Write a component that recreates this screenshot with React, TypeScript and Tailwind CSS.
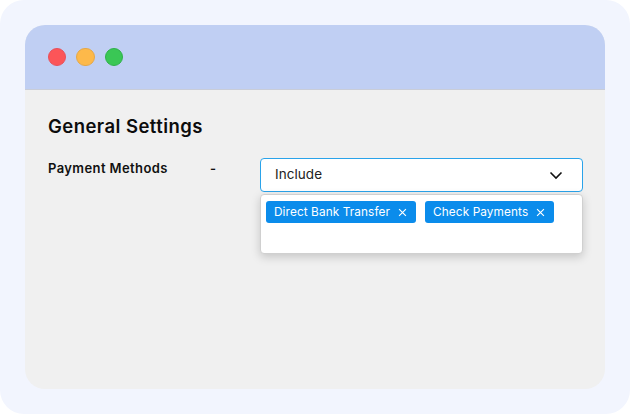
import React from "react";

function Tag({ label }: { label: string }) {
  return (
    <div className="flex h-[22px] items-center gap-[8px] rounded-[3px] bg-[#0b8ceb] pl-[8px] pr-[9px] pt-px text-[11.8px] leading-none tracking-[0.1px] text-white">
      <span>{label}</span>
      <svg width="9" height="9" viewBox="0 0 10 10" fill="none" stroke="white" strokeWidth="1.3" className="-mt-px">
        <path d="M1.2 1.2 8.8 8.8M8.8 1.2 1.2 8.8" />
      </svg>
    </div>
  );
}

export default function App() {
  return (
    <div className="h-[414px] w-[630px] bg-white font-['Inter',sans-serif]">
      <div className="h-full w-full rounded-[24px] bg-[#f2f5fe] p-[25px]">
        <div className="h-[364px] w-[580px] overflow-hidden rounded-[20px] bg-[#f0f0f0]">
          <div className="flex h-[65px] items-center gap-[10px] border-b border-[#c9cdd8] bg-[#c0cff3] pl-[23px]">
            <div className="h-[18.4px] w-[18.4px] rounded-full border border-[#e8505a] bg-[#fc5558]" />
            <div className="h-[18.4px] w-[18.4px] rounded-full border border-[#e5a848] bg-[#fdb94a]" />
            <div className="h-[18.4px] w-[18.4px] rounded-full border border-[#2fb14a] bg-[#3ac755]" />
          </div>
          <div className="pl-[23px] pr-[22px] pt-[24px]">
            <h1 className="text-[18.5px] font-semibold leading-[24px] tracking-[0.45px] text-[#0c0c0c]">General Settings</h1>
            <div className="mt-[20px] flex items-start">
              <div className="w-[162px] pt-px text-[13px] font-semibold leading-[18px] tracking-[0.4px] text-[#111]">Payment Methods</div>
              <div className="w-[50px] pt-px text-[13px] font-semibold leading-[18px] text-[#111]">-</div>
              <div className="w-[323px] shrink-0">
                <div className="flex h-[34px] items-center justify-between rounded-[4px] border border-[#2aa3ea] bg-white pl-[14px] pr-[19px] text-[13.5px] tracking-[0.05px] text-[#222]">
                  <span className="-mt-px">Include</span>
                  <svg width="14" height="14" viewBox="0 0 14 14" fill="none" stroke="#111" strokeWidth="1.6">
                    <path d="M1.5 4.5 7 10 12.5 4.5" />
                  </svg>
                </div>
                <div className="mt-[2px] h-[60px] rounded-[4px] border border-[#d0d0d0] bg-white pl-[5px] pt-[6px] shadow-[0_3px_10px_rgba(0,0,0,0.18)]">
                  <div className="flex gap-[9px]">
                    <Tag label="Direct Bank Transfer" />
                    <Tag label="Check Payments" />
                  </div>
                </div>
              </div>
            </div>
          </div>
        </div>
      </div>
    </div>
  );
}
